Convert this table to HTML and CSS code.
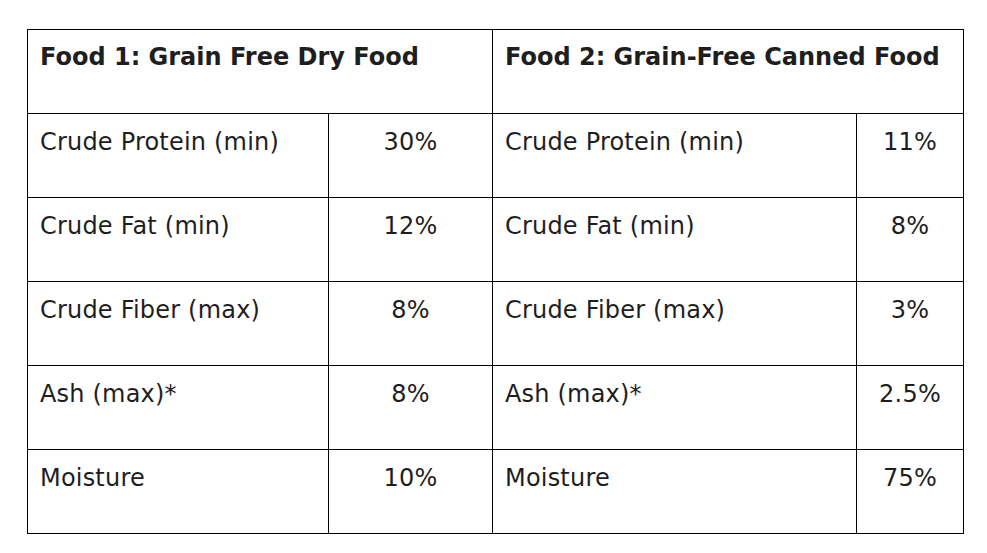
FILE: index.html
```html
<!DOCTYPE html>
<html>
<head>
<meta charset="utf-8">
<link rel="stylesheet" href="styles.css">
</head>
<body>
<div class="page">
<table class="food">
<colgroup>
<col class="c1"><col class="c2"><col class="c3"><col class="c4">
</colgroup>
<tr class="head">
<th colspan="2">Food 1: Grain Free Dry Food</th>
<th colspan="2">Food 2: Grain-Free Canned Food</th>
</tr>
<tr><td>Crude Protein (min)</td><td class="v">30%</td><td>Crude Protein (min)</td><td class="v">11%</td></tr>
<tr><td>Crude Fat (min)</td><td class="v">12%</td><td>Crude Fat (min)</td><td class="v">8%</td></tr>
<tr><td>Crude Fiber (max)</td><td class="v">8%</td><td>Crude Fiber (max)</td><td class="v">3%</td></tr>
<tr><td>Ash (max)*</td><td class="v">8%</td><td>Ash (max)*</td><td class="v">2.5%</td></tr>
<tr><td>Moisture</td><td class="v">10%</td><td>Moisture</td><td class="v">75%</td></tr>
</table>
</div>
</body>
</html>
```
FILE: styles.css
```css
html, body {
  margin: 0;
  padding: 0;
  background: #fff;
}
.page {
  padding: 29px 0 0 27px;
}
.food {
  border-collapse: collapse;
  table-layout: fixed;
  width: 936px;
  font-family: Verdana, "DejaVu Sans", sans-serif;
  font-size: 24px;
  color: #1e1e1e;
}
.c1 { width: 301px; }
.c2 { width: 164px; }
.c3 { width: 364px; }
.c4 { width: 107px; }
.food th, .food td {
  border: 1px solid #000;
  height: 84px;
  box-sizing: border-box;
  padding: 12px 12px 0 12px;
  vertical-align: top;
  text-align: left;
  line-height: 33px;
  font-weight: normal;
  white-space: nowrap;
}
.food td {
  letter-spacing: 0.2px;
}
.food th {
  font-weight: bold;
  padding-top: 11px;
}
.food td.v {
  text-align: center;
}
```
